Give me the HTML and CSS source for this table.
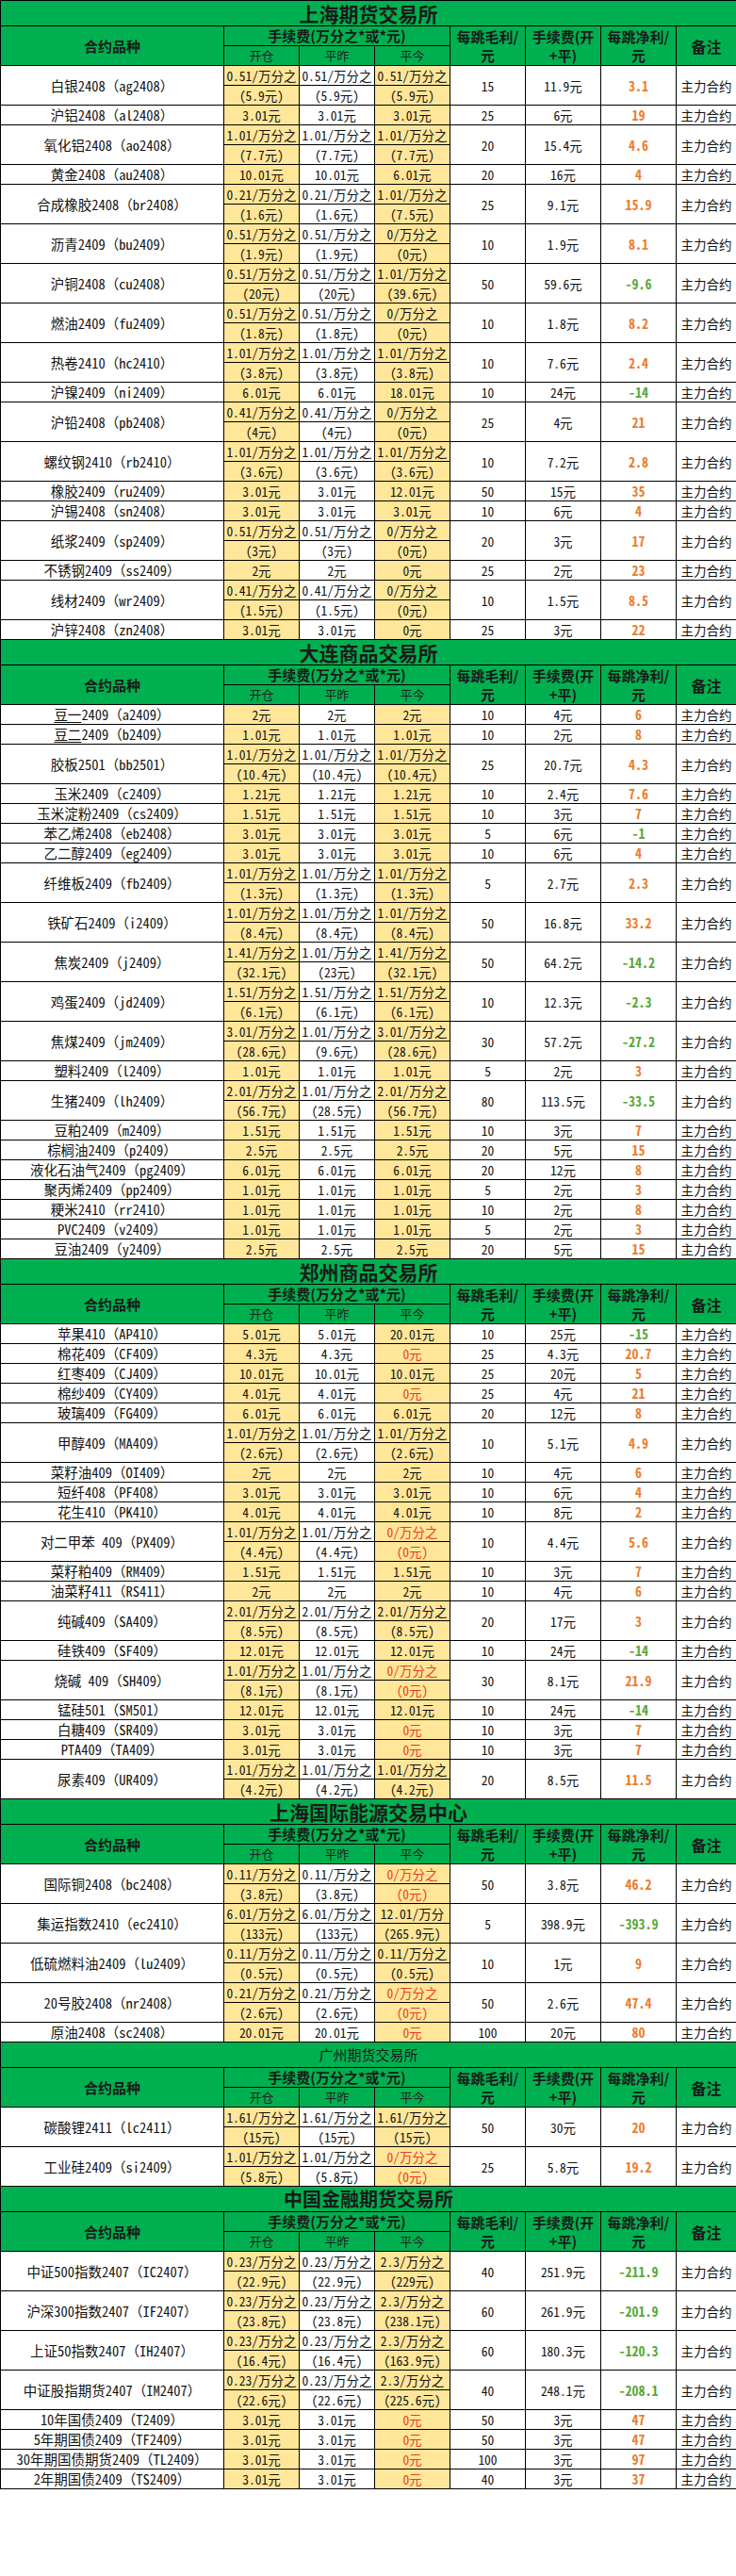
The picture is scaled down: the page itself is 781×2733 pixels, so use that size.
FILE: index.html
```html
<!DOCTYPE html>
<html lang="zh-CN">
<head>
<meta charset="utf-8">
<title>期货手续费一览</title>
<link rel="stylesheet" href="styles.css">
</head>
<body>
<table class="sheet">
<colgroup><col class="c-name"><col class="c-fee"><col class="c-fee"><col class="c-fee"><col class="c-fee"><col class="c-fee"><col class="c-fee"><col class="c-note"></colgroup>
<tbody>
<!-- 上海期货交易所 -->
<tr class="title t38"><td colspan="8">上海期货交易所</td></tr>
<tr class="hd"><th rowspan="2">合约品种</th><th colspan="3">手续费(万分之*或*元)</th><th rowspan="2">每跳毛利/<br>元</th><th rowspan="2">手续费(开<br>+平)</th><th rowspan="2">每跳净利/<br>元</th><th rowspan="2" class="bz-h">备注</th></tr>
<tr class="hd sub"><th>开仓</th><th>平昨</th><th>平今</th></tr>

<tr><td class="n" rowspan="2">白银2408（ag2408）</td><td class="y">0.51/万分之</td><td>0.51/万分之</td><td class="y">0.51/万分之</td><td rowspan="2">15</td><td rowspan="2">11.9元</td><td class="o" rowspan="2">3.1</td><td class="bz" rowspan="2">主力合约</td></tr>
<tr><td class="y">(5.9元)</td><td>(5.9元)</td><td class="y">(5.9元)</td></tr>
<tr><td class="n">沪铝2408（al2408）</td><td class="y">3.01元</td><td>3.01元</td><td class="y">3.01元</td><td>25</td><td>6元</td><td class="o">19</td><td class="bz">主力合约</td></tr>
<tr><td class="n" rowspan="2">氧化铝2408（ao2408）</td><td class="y">1.01/万分之</td><td>1.01/万分之</td><td class="y">1.01/万分之</td><td rowspan="2">20</td><td rowspan="2">15.4元</td><td class="o" rowspan="2">4.6</td><td class="bz" rowspan="2">主力合约</td></tr>
<tr><td class="y">(7.7元)</td><td>(7.7元)</td><td class="y">(7.7元)</td></tr>
<tr><td class="n">黄金2408（au2408）</td><td class="y">10.01元</td><td>10.01元</td><td class="y">6.01元</td><td>20</td><td>16元</td><td class="o">4</td><td class="bz">主力合约</td></tr>
<tr><td class="n" rowspan="2">合成橡胶2408（br2408）</td><td class="y">0.21/万分之</td><td>0.21/万分之</td><td class="y">1.01/万分之</td><td rowspan="2">25</td><td rowspan="2">9.1元</td><td class="o" rowspan="2">15.9</td><td class="bz" rowspan="2">主力合约</td></tr>
<tr><td class="y">(1.6元)</td><td>(1.6元)</td><td class="y">(7.5元)</td></tr>
<tr><td class="n" rowspan="2">沥青2409（bu2409）</td><td class="y">0.51/万分之</td><td>0.51/万分之</td><td class="y">0/万分之</td><td rowspan="2">10</td><td rowspan="2">1.9元</td><td class="o" rowspan="2">8.1</td><td class="bz" rowspan="2">主力合约</td></tr>
<tr><td class="y">(1.9元)</td><td>(1.9元)</td><td class="y">(0元)</td></tr>
<tr><td class="n" rowspan="2">沪铜2408（cu2408）</td><td class="y">0.51/万分之</td><td>0.51/万分之</td><td class="y">1.01/万分之</td><td rowspan="2">50</td><td rowspan="2">59.6元</td><td class="g" rowspan="2">-9.6</td><td class="bz" rowspan="2">主力合约</td></tr>
<tr><td class="y">(20元)</td><td>(20元)</td><td class="y">(39.6元)</td></tr>
<tr><td class="n" rowspan="2">燃油2409（fu2409）</td><td class="y">0.51/万分之</td><td>0.51/万分之</td><td class="y">0/万分之</td><td rowspan="2">10</td><td rowspan="2">1.8元</td><td class="o" rowspan="2">8.2</td><td class="bz" rowspan="2">主力合约</td></tr>
<tr><td class="y">(1.8元)</td><td>(1.8元)</td><td class="y">(0元)</td></tr>
<tr><td class="n" rowspan="2">热卷2410（hc2410）</td><td class="y">1.01/万分之</td><td>1.01/万分之</td><td class="y">1.01/万分之</td><td rowspan="2">10</td><td rowspan="2">7.6元</td><td class="o" rowspan="2">2.4</td><td class="bz" rowspan="2">主力合约</td></tr>
<tr><td class="y">(3.8元)</td><td>(3.8元)</td><td class="y">(3.8元)</td></tr>
<tr><td class="n">沪镍2409（ni2409）</td><td class="y">6.01元</td><td>6.01元</td><td class="y">18.01元</td><td>10</td><td>24元</td><td class="g">-14</td><td class="bz">主力合约</td></tr>
<tr><td class="n" rowspan="2">沪铅2408（pb2408）</td><td class="y">0.41/万分之</td><td>0.41/万分之</td><td class="y">0/万分之</td><td rowspan="2">25</td><td rowspan="2">4元</td><td class="o" rowspan="2">21</td><td class="bz" rowspan="2">主力合约</td></tr>
<tr><td class="y">(4元)</td><td>(4元)</td><td class="y">(0元)</td></tr>
<tr><td class="n" rowspan="2">螺纹钢2410（rb2410）</td><td class="y">1.01/万分之</td><td>1.01/万分之</td><td class="y">1.01/万分之</td><td rowspan="2">10</td><td rowspan="2">7.2元</td><td class="o" rowspan="2">2.8</td><td class="bz" rowspan="2">主力合约</td></tr>
<tr><td class="y">(3.6元)</td><td>(3.6元)</td><td class="y">(3.6元)</td></tr>
<tr><td class="n">橡胶2409（ru2409）</td><td class="y">3.01元</td><td>3.01元</td><td class="y">12.01元</td><td>50</td><td>15元</td><td class="o">35</td><td class="bz">主力合约</td></tr>
<tr><td class="n">沪锡2408（sn2408）</td><td class="y">3.01元</td><td>3.01元</td><td class="y">3.01元</td><td>10</td><td>6元</td><td class="o">4</td><td class="bz">主力合约</td></tr>
<tr><td class="n" rowspan="2">纸浆2409（sp2409）</td><td class="y">0.51/万分之</td><td>0.51/万分之</td><td class="y">0/万分之</td><td rowspan="2">20</td><td rowspan="2">3元</td><td class="o" rowspan="2">17</td><td class="bz" rowspan="2">主力合约</td></tr>
<tr><td class="y">(3元)</td><td>(3元)</td><td class="y">(0元)</td></tr>
<tr><td class="n">不锈钢2409（ss2409）</td><td class="y">2元</td><td>2元</td><td class="y">0元</td><td>25</td><td>2元</td><td class="o">23</td><td class="bz">主力合约</td></tr>
<tr><td class="n" rowspan="2">线材2409（wr2409）</td><td class="y">0.41/万分之</td><td>0.41/万分之</td><td class="y">0/万分之</td><td rowspan="2">10</td><td rowspan="2">1.5元</td><td class="o" rowspan="2">8.5</td><td class="bz" rowspan="2">主力合约</td></tr>
<tr><td class="y">(1.5元)</td><td>(1.5元)</td><td class="y">(0元)</td></tr>
<tr><td class="n">沪锌2408（zn2408）</td><td class="y">3.01元</td><td>3.01元</td><td class="y">0元</td><td>25</td><td>3元</td><td class="o">22</td><td class="bz">主力合约</td></tr>

<!-- 大连商品交易所 -->
<tr class="title t45"><td colspan="8">大连商品交易所</td></tr>
<tr class="hd"><th rowspan="2">合约品种</th><th colspan="3">手续费(万分之*或*元)</th><th rowspan="2">每跳毛利/<br>元</th><th rowspan="2">手续费(开<br>+平)</th><th rowspan="2">每跳净利/<br>元</th><th rowspan="2" class="bz-h">备注</th></tr>
<tr class="hd sub"><th>开仓</th><th>平昨</th><th>平今</th></tr>

<tr><td class="n"><span class="u">豆一</span>2409（a2409）</td><td class="y">2元</td><td>2元</td><td class="y">2元</td><td>10</td><td>4元</td><td class="o">6</td><td class="bz">主力合约</td></tr>
<tr><td class="n"><span class="u">豆二</span>2409（b2409）</td><td class="y">1.01元</td><td>1.01元</td><td class="y">1.01元</td><td>10</td><td>2元</td><td class="o">8</td><td class="bz">主力合约</td></tr>
<tr><td class="n" rowspan="2">胶板2501（bb2501）</td><td class="y">1.01/万分之</td><td>1.01/万分之</td><td class="y">1.01/万分之</td><td rowspan="2">25</td><td rowspan="2">20.7元</td><td class="o" rowspan="2">4.3</td><td class="bz" rowspan="2">主力合约</td></tr>
<tr><td class="y">(10.4元)</td><td>(10.4元)</td><td class="y">(10.4元)</td></tr>
<tr><td class="n">玉米2409（c2409）</td><td class="y">1.21元</td><td>1.21元</td><td class="y">1.21元</td><td>10</td><td>2.4元</td><td class="o">7.6</td><td class="bz">主力合约</td></tr>
<tr><td class="n">玉米淀粉2409（cs2409）</td><td class="y">1.51元</td><td>1.51元</td><td class="y">1.51元</td><td>10</td><td>3元</td><td class="o">7</td><td class="bz">主力合约</td></tr>
<tr><td class="n">苯乙烯2408（eb2408）</td><td class="y">3.01元</td><td>3.01元</td><td class="y">3.01元</td><td>5</td><td>6元</td><td class="g">-1</td><td class="bz">主力合约</td></tr>
<tr><td class="n">乙二醇2409（eg2409）</td><td class="y">3.01元</td><td>3.01元</td><td class="y">3.01元</td><td>10</td><td>6元</td><td class="o">4</td><td class="bz">主力合约</td></tr>
<tr><td class="n" rowspan="2">纤维板2409（fb2409）</td><td class="y">1.01/万分之</td><td>1.01/万分之</td><td class="y">1.01/万分之</td><td rowspan="2">5</td><td rowspan="2">2.7元</td><td class="o" rowspan="2">2.3</td><td class="bz" rowspan="2">主力合约</td></tr>
<tr><td class="y">(1.3元)</td><td>(1.3元)</td><td class="y">(1.3元)</td></tr>
<tr><td class="n" rowspan="2">铁矿石2409（i2409）</td><td class="y">1.01/万分之</td><td>1.01/万分之</td><td class="y">1.01/万分之</td><td rowspan="2">50</td><td rowspan="2">16.8元</td><td class="o" rowspan="2">33.2</td><td class="bz" rowspan="2">主力合约</td></tr>
<tr><td class="y">(8.4元)</td><td>(8.4元)</td><td class="y">(8.4元)</td></tr>
<tr><td class="n" rowspan="2">焦炭2409（j2409）</td><td class="y">1.41/万分之</td><td>1.01/万分之</td><td class="y">1.41/万分之</td><td rowspan="2">50</td><td rowspan="2">64.2元</td><td class="g" rowspan="2">-14.2</td><td class="bz" rowspan="2">主力合约</td></tr>
<tr><td class="y">(32.1元)</td><td>(23元)</td><td class="y">(32.1元)</td></tr>
<tr><td class="n" rowspan="2">鸡蛋2409（jd2409）</td><td class="y">1.51/万分之</td><td>1.51/万分之</td><td class="y">1.51/万分之</td><td rowspan="2">10</td><td rowspan="2">12.3元</td><td class="g" rowspan="2">-2.3</td><td class="bz" rowspan="2">主力合约</td></tr>
<tr><td class="y">(6.1元)</td><td>(6.1元)</td><td class="y">(6.1元)</td></tr>
<tr><td class="n" rowspan="2">焦煤2409（jm2409）</td><td class="y">3.01/万分之</td><td>1.01/万分之</td><td class="y">3.01/万分之</td><td rowspan="2">30</td><td rowspan="2">57.2元</td><td class="g" rowspan="2">-27.2</td><td class="bz" rowspan="2">主力合约</td></tr>
<tr><td class="y">(28.6元)</td><td>(9.6元)</td><td class="y">(28.6元)</td></tr>
<tr><td class="n">塑料2409（l2409）</td><td class="y">1.01元</td><td>1.01元</td><td class="y">1.01元</td><td>5</td><td>2元</td><td class="o">3</td><td class="bz">主力合约</td></tr>
<tr><td class="n" rowspan="2">生猪2409（lh2409）</td><td class="y">2.01/万分之</td><td>1.01/万分之</td><td class="y">2.01/万分之</td><td rowspan="2">80</td><td rowspan="2">113.5元</td><td class="g" rowspan="2">-33.5</td><td class="bz" rowspan="2">主力合约</td></tr>
<tr><td class="y">(56.7元)</td><td>(28.5元)</td><td class="y">(56.7元)</td></tr>
<tr><td class="n">豆粕2409（m2409）</td><td class="y">1.51元</td><td>1.51元</td><td class="y">1.51元</td><td>10</td><td>3元</td><td class="o">7</td><td class="bz">主力合约</td></tr>
<tr><td class="n">棕榈油2409（p2409）</td><td class="y">2.5元</td><td>2.5元</td><td class="y">2.5元</td><td>20</td><td>5元</td><td class="o">15</td><td class="bz">主力合约</td></tr>
<tr><td class="n">液化石油气2409（pg2409）</td><td class="y">6.01元</td><td>6.01元</td><td class="y">6.01元</td><td>20</td><td>12元</td><td class="o">8</td><td class="bz">主力合约</td></tr>
<tr><td class="n">聚丙烯2409（pp2409）</td><td class="y">1.01元</td><td>1.01元</td><td class="y">1.01元</td><td>5</td><td>2元</td><td class="o">3</td><td class="bz">主力合约</td></tr>
<tr><td class="n">粳米2410（rr2410）</td><td class="y">1.01元</td><td>1.01元</td><td class="y">1.01元</td><td>10</td><td>2元</td><td class="o">8</td><td class="bz">主力合约</td></tr>
<tr><td class="n">PVC2409（v2409）</td><td class="y">1.01元</td><td>1.01元</td><td class="y">1.01元</td><td>5</td><td>2元</td><td class="o">3</td><td class="bz">主力合约</td></tr>
<tr><td class="n">豆油2409（y2409）</td><td class="y">2.5元</td><td>2.5元</td><td class="y">2.5元</td><td>20</td><td>5元</td><td class="o">15</td><td class="bz">主力合约</td></tr>

<!-- 郑州商品交易所 -->
<tr class="title t44"><td colspan="8">郑州商品交易所</td></tr>
<tr class="hd"><th rowspan="2">合约品种</th><th colspan="3">手续费(万分之*或*元)</th><th rowspan="2">每跳毛利/<br>元</th><th rowspan="2">手续费(开<br>+平)</th><th rowspan="2">每跳净利/<br>元</th><th rowspan="2" class="bz-h">备注</th></tr>
<tr class="hd sub"><th>开仓</th><th>平昨</th><th>平今</th></tr>

<tr><td class="n">苹果410（AP410）</td><td class="y">5.01元</td><td>5.01元</td><td class="y">20.01元</td><td>10</td><td>25元</td><td class="g">-15</td><td class="bz">主力合约</td></tr>
<tr><td class="n">棉花409（CF409）</td><td class="y">4.3元</td><td>4.3元</td><td class="y r">0元</td><td>25</td><td>4.3元</td><td class="o">20.7</td><td class="bz">主力合约</td></tr>
<tr><td class="n">红枣409（CJ409）</td><td class="y">10.01元</td><td>10.01元</td><td class="y">10.01元</td><td>25</td><td>20元</td><td class="o">5</td><td class="bz">主力合约</td></tr>
<tr><td class="n">棉纱409（CY409）</td><td class="y">4.01元</td><td>4.01元</td><td class="y r">0元</td><td>25</td><td>4元</td><td class="o">21</td><td class="bz">主力合约</td></tr>
<tr><td class="n">玻璃409（FG409）</td><td class="y">6.01元</td><td>6.01元</td><td class="y">6.01元</td><td>20</td><td>12元</td><td class="o">8</td><td class="bz">主力合约</td></tr>
<tr><td class="n" rowspan="2">甲醇409（MA409）</td><td class="y">1.01/万分之</td><td>1.01/万分之</td><td class="y">1.01/万分之</td><td rowspan="2">10</td><td rowspan="2">5.1元</td><td class="o" rowspan="2">4.9</td><td class="bz" rowspan="2">主力合约</td></tr>
<tr><td class="y">(2.6元)</td><td>(2.6元)</td><td class="y">(2.6元)</td></tr>
<tr><td class="n">菜籽油409（OI409）</td><td class="y">2元</td><td>2元</td><td class="y">2元</td><td>10</td><td>4元</td><td class="o">6</td><td class="bz">主力合约</td></tr>
<tr><td class="n">短纤408（PF408）</td><td class="y">3.01元</td><td>3.01元</td><td class="y">3.01元</td><td>10</td><td>6元</td><td class="o">4</td><td class="bz">主力合约</td></tr>
<tr><td class="n">花生410（PK410）</td><td class="y">4.01元</td><td>4.01元</td><td class="y">4.01元</td><td>10</td><td>8元</td><td class="o">2</td><td class="bz">主力合约</td></tr>
<tr><td class="n" rowspan="2">对二甲苯 409（PX409）</td><td class="y">1.01/万分之</td><td>1.01/万分之</td><td class="y r">0/万分之</td><td rowspan="2">10</td><td rowspan="2">4.4元</td><td class="o" rowspan="2">5.6</td><td class="bz" rowspan="2">主力合约</td></tr>
<tr><td class="y">(4.4元)</td><td>(4.4元)</td><td class="y r">(0元)</td></tr>
<tr><td class="n">菜籽粕409（RM409）</td><td class="y">1.51元</td><td>1.51元</td><td class="y">1.51元</td><td>10</td><td>3元</td><td class="o">7</td><td class="bz">主力合约</td></tr>
<tr><td class="n">油菜籽411（RS411）</td><td class="y">2元</td><td>2元</td><td class="y">2元</td><td>10</td><td>4元</td><td class="o">6</td><td class="bz">主力合约</td></tr>
<tr><td class="n" rowspan="2">纯碱409（SA409）</td><td class="y">2.01/万分之</td><td>2.01/万分之</td><td class="y">2.01/万分之</td><td rowspan="2">20</td><td rowspan="2">17元</td><td class="o" rowspan="2">3</td><td class="bz" rowspan="2">主力合约</td></tr>
<tr><td class="y">(8.5元)</td><td>(8.5元)</td><td class="y">(8.5元)</td></tr>
<tr><td class="n">硅铁409（SF409）</td><td class="y">12.01元</td><td>12.01元</td><td class="y">12.01元</td><td>10</td><td>24元</td><td class="g">-14</td><td class="bz">主力合约</td></tr>
<tr><td class="n" rowspan="2">烧碱 409（SH409）</td><td class="y">1.01/万分之</td><td>1.01/万分之</td><td class="y r">0/万分之</td><td rowspan="2">30</td><td rowspan="2">8.1元</td><td class="o" rowspan="2">21.9</td><td class="bz" rowspan="2">主力合约</td></tr>
<tr><td class="y">(8.1元)</td><td>(8.1元)</td><td class="y r">(0元)</td></tr>
<tr><td class="n">锰硅501（SM501）</td><td class="y">12.01元</td><td>12.01元</td><td class="y">12.01元</td><td>10</td><td>24元</td><td class="g">-14</td><td class="bz">主力合约</td></tr>
<tr><td class="n">白糖409（SR409）</td><td class="y">3.01元</td><td>3.01元</td><td class="y r">0元</td><td>10</td><td>3元</td><td class="o">7</td><td class="bz">主力合约</td></tr>
<tr><td class="n">PTA409（TA409）</td><td class="y">3.01元</td><td>3.01元</td><td class="y r">0元</td><td>10</td><td>3元</td><td class="o">7</td><td class="bz">主力合约</td></tr>
<tr><td class="n" rowspan="2">尿素409（UR409）</td><td class="y">1.01/万分之</td><td>1.01/万分之</td><td class="y">1.01/万分之</td><td rowspan="2">20</td><td rowspan="2">8.5元</td><td class="o" rowspan="2">11.5</td><td class="bz" rowspan="2">主力合约</td></tr>
<tr><td class="y">(4.2元)</td><td>(4.2元)</td><td class="y">(4.2元)</td></tr>

<!-- 上海国际能源交易中心 -->
<tr class="title t44"><td colspan="8">上海国际能源交易中心</td></tr>
<tr class="hd"><th rowspan="2">合约品种</th><th colspan="3">手续费(万分之*或*元)</th><th rowspan="2">每跳毛利/<br>元</th><th rowspan="2">手续费(开<br>+平)</th><th rowspan="2">每跳净利/<br>元</th><th rowspan="2" class="bz-h">备注</th></tr>
<tr class="hd sub"><th>开仓</th><th>平昨</th><th>平今</th></tr>

<tr><td class="n" rowspan="2">国际铜2408（bc2408）</td><td class="y">0.11/万分之</td><td>0.11/万分之</td><td class="y r">0/万分之</td><td rowspan="2">50</td><td rowspan="2">3.8元</td><td class="o" rowspan="2">46.2</td><td class="bz" rowspan="2">主力合约</td></tr>
<tr><td class="y">(3.8元)</td><td>(3.8元)</td><td class="y r">(0元)</td></tr>
<tr><td class="n" rowspan="2">集运指数2410（ec2410）</td><td class="y">6.01/万分之</td><td>6.01/万分之</td><td class="y clip">12.01/万分</td><td rowspan="2">5</td><td rowspan="2">398.9元</td><td class="g" rowspan="2">-393.9</td><td class="bz" rowspan="2">主力合约</td></tr>
<tr><td class="y">(133元)</td><td>(133元)</td><td class="y">(265.9元)</td></tr>
<tr><td class="n" rowspan="2">低硫燃料油2409（lu2409）</td><td class="y">0.11/万分之</td><td>0.11/万分之</td><td class="y">0.11/万分之</td><td rowspan="2">10</td><td rowspan="2">1元</td><td class="o" rowspan="2">9</td><td class="bz" rowspan="2">主力合约</td></tr>
<tr><td class="y">(0.5元)</td><td>(0.5元)</td><td class="y">(0.5元)</td></tr>
<tr><td class="n" rowspan="2">20号胶2408（nr2408）</td><td class="y">0.21/万分之</td><td>0.21/万分之</td><td class="y r">0/万分之</td><td rowspan="2">50</td><td rowspan="2">2.6元</td><td class="o" rowspan="2">47.4</td><td class="bz" rowspan="2">主力合约</td></tr>
<tr><td class="y">(2.6元)</td><td>(2.6元)</td><td class="y r">(0元)</td></tr>
<tr><td class="n">原油2408（sc2408）</td><td class="y">20.01元</td><td>20.01元</td><td class="y r">0元</td><td>100</td><td>20元</td><td class="o">80</td><td class="bz">主力合约</td></tr>

<!-- 广州期货交易所 -->
<tr class="title t42 light"><td colspan="8">广州期货交易所</td></tr>
<tr class="hd"><th rowspan="2">合约品种</th><th colspan="3">手续费(万分之*或*元)</th><th rowspan="2">每跳毛利/<br>元</th><th rowspan="2">手续费(开<br>+平)</th><th rowspan="2">每跳净利/<br>元</th><th rowspan="2" class="bz-h">备注</th></tr>
<tr class="hd sub"><th>开仓</th><th>平昨</th><th>平今</th></tr>

<tr><td class="n" rowspan="2">碳酸锂2411（lc2411）</td><td class="y">1.61/万分之</td><td>1.61/万分之</td><td class="y">1.61/万分之</td><td rowspan="2">50</td><td rowspan="2">30元</td><td class="o" rowspan="2">20</td><td class="bz" rowspan="2">主力合约</td></tr>
<tr><td class="y">(15元)</td><td>(15元)</td><td class="y">(15元)</td></tr>
<tr><td class="n" rowspan="2">工业硅2409（si2409）</td><td class="y">1.01/万分之</td><td>1.01/万分之</td><td class="y r">0/万分之</td><td rowspan="2">25</td><td rowspan="2">5.8元</td><td class="o" rowspan="2">19.2</td><td class="bz" rowspan="2">主力合约</td></tr>
<tr><td class="y">(5.8元)</td><td>(5.8元)</td><td class="y r">(0元)</td></tr>

<!-- 中国金融期货交易所 -->
<tr class="title t42 small"><td colspan="8">中国金融期货交易所</td></tr>
<tr class="hd"><th rowspan="2">合约品种</th><th colspan="3">手续费(万分之*或*元)</th><th rowspan="2">每跳毛利/<br>元</th><th rowspan="2">手续费(开<br>+平)</th><th rowspan="2">每跳净利/<br>元</th><th rowspan="2" class="bz-h">备注</th></tr>
<tr class="hd sub"><th>开仓</th><th>平昨</th><th>平今</th></tr>

<tr><td class="n" rowspan="2">中证500指数2407（IC2407）</td><td class="y">0.23/万分之</td><td>0.23/万分之</td><td class="y">2.3/万分之</td><td rowspan="2">40</td><td rowspan="2">251.9元</td><td class="g" rowspan="2">-211.9</td><td class="bz" rowspan="2">主力合约</td></tr>
<tr><td class="y">(22.9元)</td><td>(22.9元)</td><td class="y">(229元)</td></tr>
<tr><td class="n" rowspan="2">沪深300指数2407（IF2407）</td><td class="y">0.23/万分之</td><td>0.23/万分之</td><td class="y">2.3/万分之</td><td rowspan="2">60</td><td rowspan="2">261.9元</td><td class="g" rowspan="2">-201.9</td><td class="bz" rowspan="2">主力合约</td></tr>
<tr><td class="y">(23.8元)</td><td>(23.8元)</td><td class="y">(238.1元)</td></tr>
<tr><td class="n" rowspan="2">上证50指数2407（IH2407）</td><td class="y">0.23/万分之</td><td>0.23/万分之</td><td class="y">2.3/万分之</td><td rowspan="2">60</td><td rowspan="2">180.3元</td><td class="g" rowspan="2">-120.3</td><td class="bz" rowspan="2">主力合约</td></tr>
<tr><td class="y">(16.4元)</td><td>(16.4元)</td><td class="y">(163.9元)</td></tr>
<tr><td class="n" rowspan="2">中证股指期货2407（IM2407）</td><td class="y">0.23/万分之</td><td>0.23/万分之</td><td class="y">2.3/万分之</td><td rowspan="2">40</td><td rowspan="2">248.1元</td><td class="g" rowspan="2">-208.1</td><td class="bz" rowspan="2">主力合约</td></tr>
<tr><td class="y">(22.6元)</td><td>(22.6元)</td><td class="y">(225.6元)</td></tr>
<tr><td class="n">10年国债2409（T2409）</td><td class="y">3.01元</td><td>3.01元</td><td class="y r">0元</td><td>50</td><td>3元</td><td class="o">47</td><td class="bz">主力合约</td></tr>
<tr><td class="n">5年期国债2409（TF2409）</td><td class="y">3.01元</td><td>3.01元</td><td class="y r">0元</td><td>50</td><td>3元</td><td class="o">47</td><td class="bz">主力合约</td></tr>
<tr><td class="n">30年期国债期货2409（TL2409）</td><td class="y">3.01元</td><td>3.01元</td><td class="y r">0元</td><td>100</td><td>3元</td><td class="o">97</td><td class="bz">主力合约</td></tr>
<tr><td class="n">2年期国债2409（TS2409）</td><td class="y">3.01元</td><td>3.01元</td><td class="y r">0元</td><td>40</td><td>3元</td><td class="o">37</td><td class="bz">主力合约</td></tr>
</tbody>
</table>
</body>
</html>
```

FILE: styles.css
```css
html, body {
  margin: 0;
  padding: 0;
  background: #ffffff;
}

.sheet {
  width: 781px;
  border-collapse: collapse;
  table-layout: fixed;
  font-family: "Noto Sans Mono CJK SC", "Liberation Mono", "Noto Sans CJK SC", monospace;
  font-size: 13.5px;
  color: #111111;
}

.c-name { width: 237px; }
.c-fee { width: 80px; }
.c-note { width: 64px; }

.sheet tr { height: 21px; }

.sheet td,
.sheet th {
  border: 1px solid #000000;
  padding: 0;
  text-align: center;
  vertical-align: middle;
  line-height: 18px;
  white-space: nowrap;
  overflow: hidden;
}

.sheet td.n {
  font-size: 14.5px;
}

.sheet td.y {
  background: #ffe699;
}

.sheet td.r {
  color: #ee3a1c;
}

.sheet td.o,
.sheet td.g {
  font-weight: bold;
  font-size: 14px;
}

.sheet td.o { color: #ec7d2e; }
.sheet td.g { color: #5aa838; }

.sheet td.bz {
  font-size: 13.5px;
}

.u {
  text-decoration: underline;
  text-underline-offset: 2px;
}

.sheet td.clip {
  text-overflow: clip;
}

/* section titles */
.title td {
  background: #00b050;
  font-family: "Noto Sans CJK SC", sans-serif;
  font-weight: bold;
  font-size: 21px;
  color: #1a1a1a;
  line-height: 26px;
}

.title.light td {
  font-weight: normal;
  font-size: 15px;
}

.title.small td {
  font-size: 20px;
}

.t38 { height: 38px; }
.t42 { height: 42px; }
.t44 { height: 44px; }
.t45 { height: 45px; }

/* header rows */
.hd th {
  background: #00b050;
  font-family: "Noto Sans CJK SC", sans-serif;
  font-weight: bold;
  font-size: 15px;
  line-height: 20px;
  color: #1a1a1a;
}

.hd.sub th {
  font-weight: normal;
  font-size: 13px;
  color: #222222;
}

.hd th.bz-h {
  font-size: 16px;
}
```
